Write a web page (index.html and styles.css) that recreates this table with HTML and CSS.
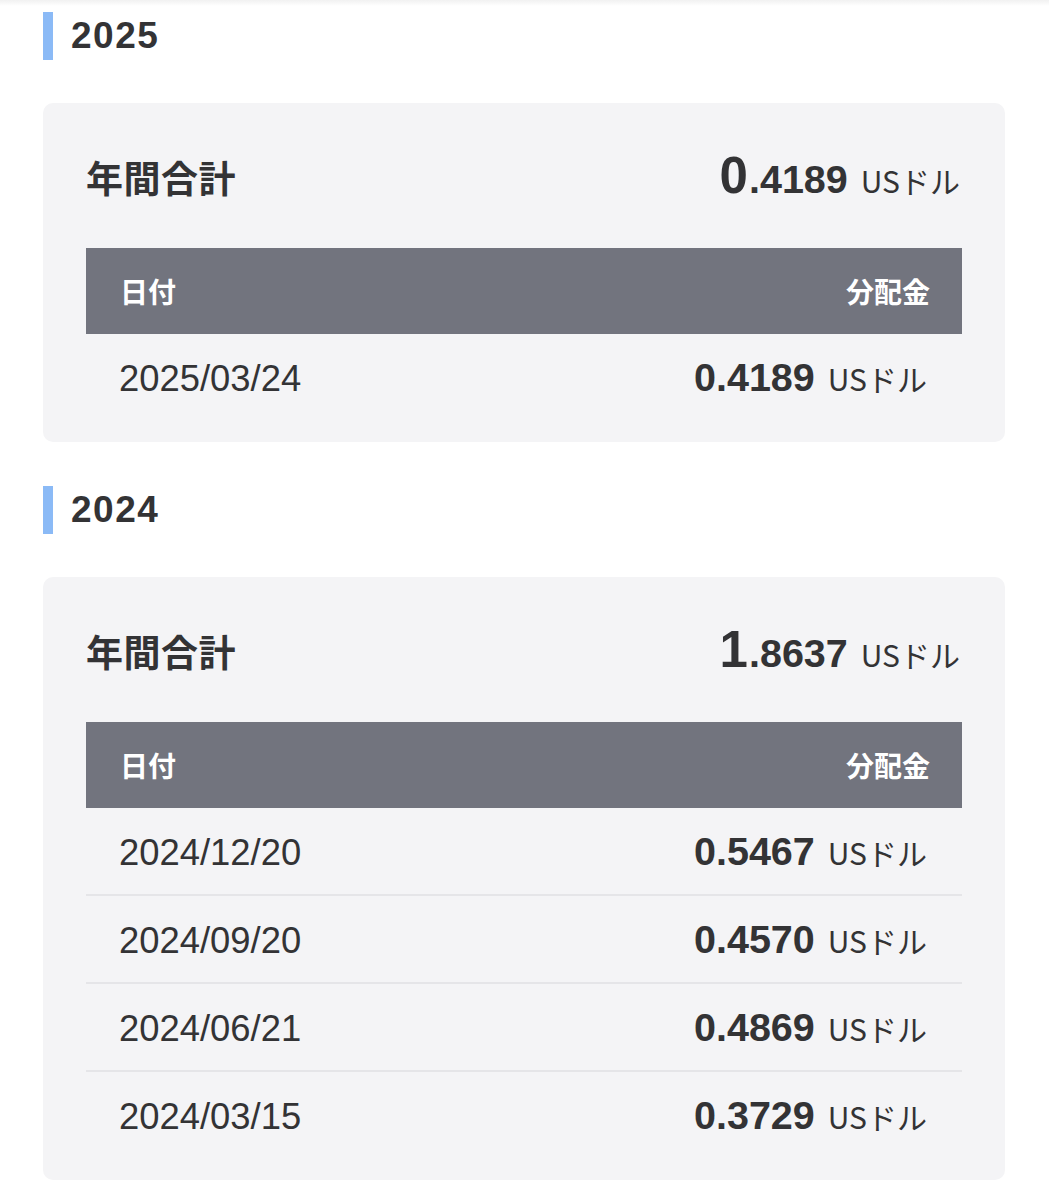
FILE: index.html
```html
<!DOCTYPE html>
<html lang="ja">
<head>
<meta charset="utf-8">
<title>分配金履歴</title>
<link rel="stylesheet" href="styles.css">
</head>
<body>
<div class="topshade"></div>
<main class="page">
  <section class="year">
    <h2 class="year-title">2025</h2>
    <div class="card">
      <div class="total">
        <span class="total-label">年間合計</span>
        <span class="total-value"><span class="big">0</span><span class="rest">.4189</span><span class="unit">USドル</span></span>
      </div>
      <div class="table">
        <div class="thead"><span>日付</span><span>分配金</span></div>
        <div class="row"><span class="date">2025/03/24</span><span class="amt"><b>0.4189</b><span class="unit">USドル</span></span></div>
      </div>
    </div>
  </section>

  <section class="year">
    <h2 class="year-title">2024</h2>
    <div class="card">
      <div class="total">
        <span class="total-label">年間合計</span>
        <span class="total-value"><span class="big">1</span><span class="rest">.8637</span><span class="unit">USドル</span></span>
      </div>
      <div class="table">
        <div class="thead"><span>日付</span><span>分配金</span></div>
        <div class="row"><span class="date">2024/12/20</span><span class="amt"><b>0.5467</b><span class="unit">USドル</span></span></div>
        <div class="row"><span class="date">2024/09/20</span><span class="amt"><b>0.4570</b><span class="unit">USドル</span></span></div>
        <div class="row"><span class="date">2024/06/21</span><span class="amt"><b>0.4869</b><span class="unit">USドル</span></span></div>
        <div class="row"><span class="date">2024/03/15</span><span class="amt"><b>0.3729</b><span class="unit">USドル</span></span></div>
      </div>
    </div>
  </section>
</main>
</body>
</html>
```

FILE: styles.css
```css
* { box-sizing: border-box; }
html, body { margin: 0; padding: 0; background: #ffffff; }
body {
  font-family: "Liberation Sans", "Noto Sans CJK JP", sans-serif;
  color: #2f2f31;
}
.topshade {
  height: 6px;
  background: linear-gradient(#f1f1f1, #ffffff);
}
.page {
  padding: 6px 44px 20px 43px;
}
.year + .year { margin-top: 44px; }
.year-title {
  margin: 0;
  height: 48px;
  line-height: 48px;
  border-left: 10px solid #8bbaf6;
  padding-left: 18px;
  font-size: 37px;
  font-weight: 700;
  letter-spacing: 1.5px;
  color: #333335;
}
.card {
  margin-top: 43px;
  background: #f4f4f6;
  border-radius: 10px;
  padding: 43px 43px 22px;
}
.total {
  display: flex;
  justify-content: space-between;
  align-items: baseline;
  height: 60px;
  line-height: 60px;
  margin-bottom: 42px;
  padding-right: 2px;
}
.total-label {
  font-family: "Noto Sans CJK JP", sans-serif;
  font-size: 37px;
  font-weight: 700;
  letter-spacing: 0.5px;
  color: #333335;
}
.total-value { white-space: nowrap; color: #333335; }
.total-value .big { font-size: 51px; font-weight: 700; }
.total-value .rest { font-size: 39.5px; font-weight: 700; margin-left: 1px; }
.unit {
  font-family: "Noto Sans CJK JP", sans-serif;
  font-size: 30px;
  font-weight: 400;
  margin-left: 13px;
  color: #333335;
}
.thead {
  display: flex;
  justify-content: space-between;
  align-items: center;
  height: 86px;
  padding: 0 32px 0 34px;
  background: #72747e;
  color: #ffffff;
  font-family: "Noto Sans CJK JP", sans-serif;
  font-size: 28px;
  font-weight: 700;
}
.row {
  display: flex;
  justify-content: space-between;
  align-items: baseline;
  height: 88px;
  line-height: 86px;
  padding: 0 35px 0 33px;
  border-bottom: 2px solid #e5e5e8;
}
.row:last-child { border-bottom: none; height: 86px; }
.date {
  font-size: 36.4px;
  font-weight: 400;
  color: #333335;
}
.amt { white-space: nowrap; color: #333335; }
.amt b { font-size: 39.5px; font-weight: 700; }
```
